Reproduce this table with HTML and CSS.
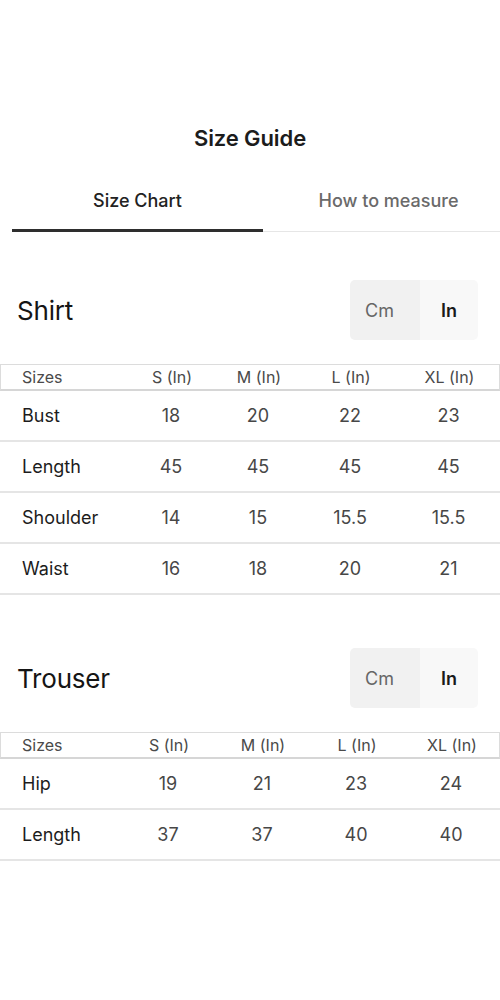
FILE: index.html
```html
<!DOCTYPE html>
<html lang="en">
<head>
<meta charset="utf-8">
<title>Size Guide</title>
<link rel="stylesheet" href="styles.css">
</head>
<body>
<div class="page">
  <h1 class="title">Size Guide</h1>
  <div class="tabs">
    <div class="tab active">Size Chart</div>
    <div class="tab">How to measure</div>
  </div>

  <section class="section shirt">
    <div class="section-head">
      <h2 class="section-title">Shirt</h2>
      <div class="toggle">
        <span class="seg cm">Cm</span>
        <span class="seg in">In</span>
      </div>
    </div>
    <div class="chart">
      <div class="row head"><span class="label">Sizes</span><span>S (In)</span><span>M (In)</span><span>L (In)</span><span>XL (In)</span></div>
      <div class="row"><span class="label">Bust</span><span>18</span><span>20</span><span>22</span><span>23</span></div>
      <div class="row"><span class="label">Length</span><span>45</span><span>45</span><span>45</span><span>45</span></div>
      <div class="row"><span class="label">Shoulder</span><span>14</span><span>15</span><span>15.5</span><span>15.5</span></div>
      <div class="row"><span class="label">Waist</span><span>16</span><span>18</span><span>20</span><span>21</span></div>
    </div>
  </section>

  <section class="section trouser">
    <div class="section-head">
      <h2 class="section-title">Trouser</h2>
      <div class="toggle">
        <span class="seg cm">Cm</span>
        <span class="seg in">In</span>
      </div>
    </div>
    <div class="chart">
      <div class="row head"><span class="label">Sizes</span><span>S (In)</span><span>M (In)</span><span>L (In)</span><span>XL (In)</span></div>
      <div class="row"><span class="label">Hip</span><span>19</span><span>21</span><span>23</span><span>24</span></div>
      <div class="row"><span class="label">Length</span><span>37</span><span>37</span><span>40</span><span>40</span></div>
    </div>
  </section>
</div>
</body>
</html>
```

FILE: styles.css
```css
* { box-sizing: border-box; }

html, body {
  margin: 0;
  padding: 0;
  background: #ffffff;
  overflow-x: hidden;
}

body {
  font-family: Inter, "Liberation Sans", sans-serif;
  color: #1c1c1c;
}

.page {
  width: 500px;
  padding-top: 122px;
}

.title {
  margin: 0;
  font-size: 22px;
  line-height: 32px;
  font-weight: 600;
  text-align: center;
  color: #1c1c1c;
  letter-spacing: -0.1px;
}

.tabs {
  display: flex;
  margin-top: 24px;
  margin-left: 12px;
  width: 502px;
}

.tab {
  flex: 1;
  text-align: center;
  font-size: 18px;
  line-height: 22px;
  padding: 12px 0 19px;
  color: #6a6a6a;
  font-weight: 500;
  border-bottom: 1px solid #e6e6e6;
}

.tab.active {
  color: #222;
  border-bottom: 3px solid #2e2e2e;
  padding-bottom: 17px;
}

.section-head {
  display: flex;
  align-items: center;
  justify-content: space-between;
  padding: 0 22px 0 17px;
}

.shirt .section-head { margin-top: 48px; }
.trouser .section-head { margin-top: 53px; }

.section-title {
  margin: 0;
  font-size: 26px;
  font-weight: 400;
  color: #151515;
  letter-spacing: -0.2px;
}

.toggle {
  display: flex;
  height: 60px;
  border-radius: 5px;
  overflow: hidden;
}

.seg {
  display: flex;
  align-items: center;
  font-size: 18px;
}

.seg.cm {
  width: 70px;
  padding-left: 15px;
  background: #f1f1f1;
  color: #666;
}

.seg.in {
  width: 58px;
  padding-left: 21px;
  background: #f8f8f8;
  color: #1a1a1a;
  font-weight: 600;
}

.chart {
  margin-top: 24px;
}

.row {
  display: grid;
  grid-template-columns: 128px 86px 88px 96px 101px;
  align-items: center;
  height: 51px;
  border-bottom: 2px solid #e5e5e5;
  font-size: 18px;
  color: #474747;
}

.trouser .row {
  grid-template-columns: 122px 92px 96px 92px 98px;
}

.row span { text-align: center; }

.row .label {
  text-align: left;
  padding-left: 22px;
  color: #1c1c1c;
}

.row.head {
  height: 27px;
  border: 1px solid #dcdcdc;
  border-bottom: 2px solid #d6d6d6;
  font-size: 16px;
  color: #4a4a4a;
}

.row.head .label {
  padding-left: 21px;
  color: #4a4a4a;
}
```
